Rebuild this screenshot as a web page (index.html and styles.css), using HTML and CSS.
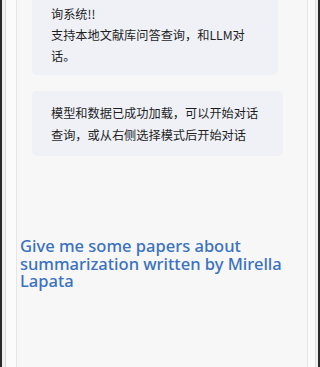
FILE: index.html
```html
<!DOCTYPE html>
<html>
<head>
<meta charset="utf-8">
<link rel="stylesheet" href="styles.css">
</head>
<body>
<div class="frame">
  <div class="outer">
    <div class="panel">
      <div class="chat">
        <div class="bubble first">询系统!!<br>支持本地文献库问答查询，和LLM对<br>话。</div>
        <div class="bubble">模型和数据已成功加载，可以开始对话<br>查询，或从右侧选择模式后开始对话</div>
      </div>
      <div class="query">Give me some papers about summarization written by Mirella Lapata</div>
    </div>
  </div>
</div>
</body>
</html>
```
FILE: styles.css
```css
html, body {
  margin: 0;
  padding: 0;
  height: 100%;
  background: #ffffff;
}
.frame {
  height: 367px;
  box-sizing: border-box;
  border-left: 2px solid #2a2a2a;
  border-right: 2px solid #2a2a2a;
  padding: 0 2px 0 3px;
  background: #f0f0f0;
  overflow: hidden;
}
.outer {
  height: 100%;
  box-sizing: border-box;
  border-left: 1px solid #dcdcdc;
  border-right: 1px solid #e2e2e2;
  background: #fbfbfb;
  padding: 0 7px 0 10px;
}
.panel {
  height: 100%;
  box-sizing: border-box;
  border-left: 1px solid #e6e6e6;
  border-right: 1px solid #e6e6e6;
  background: #f7f7f7;
  padding: 0 0 0 3px;
}
.chat {
  display: flex;
  flex-direction: column;
  gap: 16px;
  padding: 0 0 0 12px;
}
.bubble {
  width: 251px;
  box-sizing: border-box;
  background: #eff1f7;
  border-radius: 5px;
  padding: 11px 0 10px 19px;
  font-family: "Noto Sans CJK SC", "Noto Sans", sans-serif;
  font-size: 12.2px;
  line-height: 22px;
  color: #1e1e1e;
}
.bubble.first {
  border-radius: 0 0 5px 5px;
  padding: 4px 0 8px 19px;
  line-height: 21px;
  width: 246px;
}
.query {
  margin-top: 81px;
  font-family: "Noto Sans", sans-serif;
  font-size: 16.5px;
  line-height: 17.5px;
  font-weight: 500;
  color: #3a72bf;
}
```
